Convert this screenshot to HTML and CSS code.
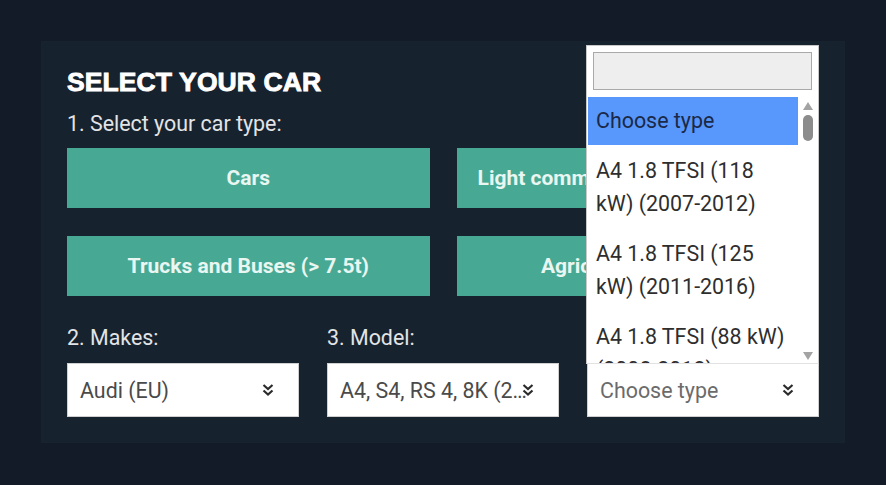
FILE: index.html
```html
<!DOCTYPE html>
<html lang="en">
<head>
  <meta charset="UTF-8">
  <meta name="viewport" content="width=device-width, initial-scale=1.0">
  <title>Select your car</title>
  <link rel="stylesheet" href="styles.css">
</head>
<body>
  <div class="panel">
    <h1 class="title">SELECT YOUR CAR</h1>

    <!-- Step 1: car type -->
    <p class="step">1. Select your car type:</p>
    <div class="types">
      <button class="type-button">Cars</button>
      <button class="type-button">Light commercial vehicles (&lt; 7.5t)</button>
      <button class="type-button">Trucks and Buses (&gt; 7.5t)</button>
      <button class="type-button">Agricultural vehicles</button>
    </div>

    <!-- Steps 2-4 -->
    <div class="fields">
      <div class="field">
        <p class="step">2. Makes:</p>
        <div class="select">
          <span class="select-text">Audi (EU)</span>
          <svg class="chevron" viewBox="0 0 14 14" width="14" height="14"><path d="M2.5 2 7 6 11.5 2M2.5 7.5 7 11.5 11.5 7.5" fill="none" stroke="#2b2b2b" stroke-width="2.2"/></svg>
        </div>
      </div>
      <div class="field">
        <p class="step">3. Model:</p>
        <div class="select">
          <span class="select-text tight">A4, S4, RS 4, 8K (2007-2015)</span>
          <svg class="chevron" viewBox="0 0 14 14" width="14" height="14"><path d="M2.5 2 7 6 11.5 2M2.5 7.5 7 11.5 11.5 7.5" fill="none" stroke="#2b2b2b" stroke-width="2.2"/></svg>
        </div>
      </div>
      <div class="field">
        <p class="step">4. Type:</p>
        <div class="select open">
          <span class="select-text placeholder">Choose type</span>
          <svg class="chevron" viewBox="0 0 14 14" width="14" height="14"><path d="M2.5 2 7 6 11.5 2M2.5 7.5 7 11.5 11.5 7.5" fill="none" stroke="#2b2b2b" stroke-width="2.2"/></svg>

          <!-- open dropdown, shown above the select -->
          <div class="dropdown">
            <div class="search"></div>
            <div class="results">
              <ul class="options">
                <li class="option active">Choose type</li>
                <li class="option">A4 1.8 TFSI (118 kW) (2007-2012)</li>
                <li class="option">A4 1.8 TFSI (125 kW) (2011-2016)</li>
                <li class="option">A4 1.8 TFSI (88 kW) (2008-2012)</li>
              </ul>
              <div class="scrollbar">
                <span class="arrow up"></span>
                <span class="thumb"></span>
                <span class="arrow down"></span>
              </div>
            </div>
          </div>
        </div>
      </div>
    </div>
  </div>
</body>
</html>
```

FILE: styles.css
```css
body {
  margin: 0;
  padding: 41px;
  background-color: #121b27;
  font-family: Roboto, "Liberation Sans", sans-serif;
}
.panel {
  background-color: #17222f;
  padding: 26px;
}
.title {
  margin: 0;
  font-family: "Liberation Sans", Arial, sans-serif;
  font-size: 26.5px;
  font-weight: bold;
  line-height: 30px;
  color: #ffffff;
  -webkit-text-stroke: 0.9px #ffffff;
  letter-spacing: 0.1px;
}
.step {
  margin: 15px 0 12px;
  font-size: 21.4px;
  line-height: 24px;
  color: #e2e4e6;
}
.types {
  display: grid;
  grid-template-columns: 1fr 1fr;
  gap: 28px 27px;
}
.type-button {
  height: 60px;
  border: none;
  background-color: #47a994;
  color: #e9f6f1;
  font-family: Roboto, sans-serif;
  font-size: 21px;
  font-weight: bold;
  white-space: nowrap;
  overflow: hidden;
  cursor: pointer;
}
.fields {
  display: grid;
  grid-template-columns: 232px 232px 232px;
  gap: 28px;
  margin-top: 30px;
}
.fields .step {
  margin: 0 0 13px;
}
.select {
  position: relative;
  height: 54px;
  box-sizing: border-box;
  display: flex;
  align-items: center;
  padding: 0 23px 0 12px;
  background-color: #ffffff;
  border: 1px solid #cfcfcf;
}
.select-text {
  flex: 1;
  min-width: 0;
  font-size: 21.4px;
  color: #4a4a4a;
  white-space: nowrap;
  overflow: hidden;
  text-overflow: ellipsis;
}
.select-text.tight {
  margin-right: -8px;
}
.select-text.placeholder {
  color: #6b6b6b;
}
.chevron {
  flex: none;
  position: relative;
}

/* dropdown */
.dropdown {
  position: absolute;
  left: -2px;
  right: -1px;
  bottom: 100%;
  height: 319px;
  box-sizing: border-box;
  background-color: #ffffff;
  border: 1px solid #c8c8c8;
  border-bottom: 1px solid #e2e2e2;
  display: flex;
  flex-direction: column;
}
.search {
  height: 38px;
  margin: 6px 6px 7px;
  box-sizing: border-box;
  background-color: #eeeeee;
  border: 1px solid #a9a9a9;
}
.results {
  flex: 1;
  min-height: 0;
  display: flex;
  padding-left: 1px;
}
.options {
  flex: 1;
  margin: 0;
  padding: 0;
  list-style: none;
  overflow: hidden;
}
.option {
  padding: 9px 8px 8px;
  font-size: 21.4px;
  line-height: 33px;
  color: #2e2e2e;
}
.option.active {
  background-color: #5897fb;
  color: #1b2947;
  padding: 7px 8px 8px;
}
.scrollbar {
  width: 20px;
  display: flex;
  flex-direction: column;
  align-items: center;
  padding: 5px 0 3px;
}
.arrow {
  width: 0;
  height: 0;
  border-left: 5px solid transparent;
  border-right: 5px solid transparent;
}
.arrow.up {
  border-bottom: 8px solid #a3a3a3;
}
.arrow.down {
  margin-top: auto;
  border-top: 8px solid #a3a3a3;
}
.thumb {
  width: 10px;
  height: 26px;
  margin-top: 5px;
  border-radius: 5px;
  background-color: #8c8c8c;
}
```
